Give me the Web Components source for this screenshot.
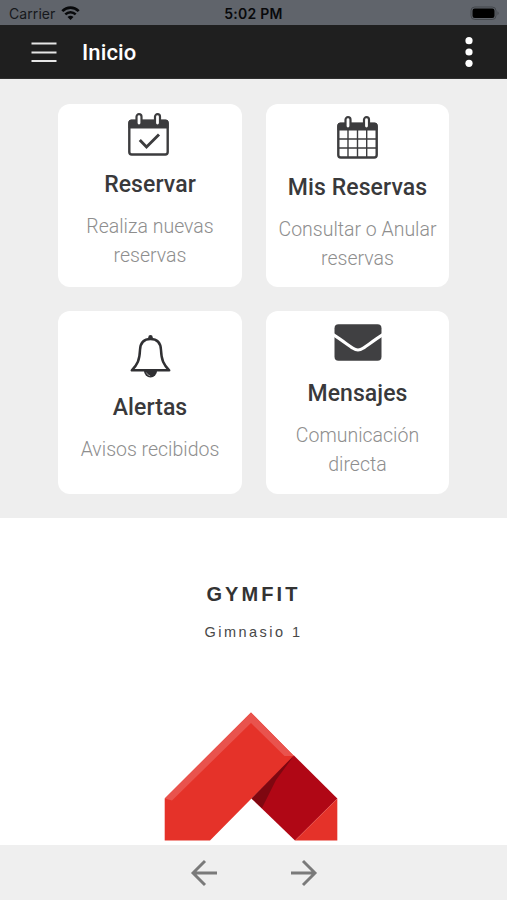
<!DOCTYPE html>
<html lang="es">
<head>
<meta charset="utf-8">
<meta name="viewport" content="width=device-width, initial-scale=1">
<title>Inicio</title>
<style>
  body {
    margin: 0;
    background: #fff;
    font-family: Roboto, 'Liberation Sans', sans-serif;
    color: #3c3c3e;
  }
</style>
</head>
<body>
<gym-app></gym-app>

<script>
class StatusBar extends HTMLElement {
  constructor() {
    super();
    this.attachShadow({ mode: 'open' });
  }

  connectedCallback() {
    this.shadowRoot.innerHTML = `
      <style>
        :host {
          display: grid;
          grid-template-columns: 1fr auto 1fr;
          align-items: center;
          height: 25px;
          box-sizing: border-box;
          padding: 2px 6px 0 9px;
          background: #60646b;
          color: #16181b;
          font: 14px/22px Inter, sans-serif;
        }
        .left { display: flex; align-items: center; gap: 6px; letter-spacing: 0.08px; }
        .time { margin-right: 3px; font-weight: 600; font-size: 14px; letter-spacing: 0.25px; color: #08090b; }
        .battery { justify-self: end; }
        svg { display: block; }
      </style>
      <div class="left">
        <span>Carrier</span>
        <svg width="19" height="15" viewBox="0 0 19 15" fill="none" stroke="#08090b">
          <path d="M1.3 5.1C6 .4 13 .4 17.700 5.100" stroke-width="2.700"/>
          <path d="M4.300 8.300C7.300 5.400 11.700 5.400 14.700 8.300" stroke-width="2.500"/>
          <path d="M9.500 14L6.500 10.900Q9.500 8.600 12.500 10.900Z" fill="#08090b" stroke="none"/>
        </svg>
      </div>
      <span class="time">5:02 PM</span>
      <svg class="battery" width="31" height="15" viewBox="0 0 31 15">
        <rect x="1" y="1" width="25" height="12.500" rx="3.800" fill="none" stroke="#43474c"/>
        <rect x="2.500" y="2.600" width="22" height="9.300" rx="2.200" fill="#000"/>
        <path d="M27.500 5.200Q29.800 7.200 27.500 9.200Z" fill="#43474c"/>
      </svg>
    `;
  }
}

class AppToolbar extends HTMLElement {
  constructor() {
    super();
    this.attachShadow({ mode: 'open' });
  }

  connectedCallback() {
    this.shadowRoot.innerHTML = `
      <style>
        :host {
          display: flex;
          align-items: center;
          height: 54px;
          box-sizing: border-box;
          padding: 0 34px 0 31px;
          background: #1f1f1f;
          border-bottom: 1px solid #2e2e2e;
          color: #fff;
        }
        h1 {
          flex: 1;
          margin: 2px 0 0 25px;
          font: 500 22px/28px Roboto, sans-serif;
          letter-spacing: 0.1px;
        }
        svg { display: block; }
      </style>
      <svg width="26" height="22" viewBox="0 0 26 22" stroke="#e6e6e6" stroke-width="1.900">
        <path d="M.5 2.500H25.500M.5 11.500H25.500M.5 20H25.500"/>
      </svg>
      <h1><slot></slot></h1>
      <svg width="8" height="30" viewBox="0 0 8 30" fill="#fff">
        <circle cx="4" cy="3.700" r="3.600"/><circle cx="4" cy="15" r="3.600"/><circle cx="4" cy="26.300" r="3.600"/>
      </svg>
    `;
  }
}

class MenuCard extends HTMLElement {
  constructor() {
    super();
    this.attachShadow({ mode: 'open' });
  }

  connectedCallback() {
    const title = this.getAttribute('heading');
    this.shadowRoot.innerHTML = `
      <style>
        :host {
          display: flex;
          flex-direction: column;
          align-items: center;
          box-sizing: border-box;
          padding: var(--top, 9px) 8px 0;
          background: #fff;
          border-radius: 12px;
          text-align: center;
        }
        h2 {
          margin: var(--gap, 15px) 0 0;
          color: #39393b;
          font: 500 23px/28px Roboto, sans-serif;
          letter-spacing: 0.08px;
        }
        p {
          margin: 13px 0 0;
          color: #8e8e8e;
          font: 300 19.5px/29px Roboto, sans-serif;
        }
      </style>
      <slot name="icon"></slot>
      <h2>${title}</h2>
      <p><slot></slot></p>
    `;
  }
}

class GymBrand extends HTMLElement {
  constructor() {
    super();
    this.attachShadow({ mode: 'open' });
  }

  connectedCallback() {
    this.shadowRoot.innerHTML = `
      <style>
        :host {
          display: flex;
          flex-direction: column;
          align-items: center;
          padding-top: 63.5px;
          font-family: 'Liberation Sans', sans-serif;
        }
        h3 {
          margin: 0;
          font-size: 20px;
          line-height: 24px;
          letter-spacing: 3.1px;
          color: #333;
        }
        p {
          margin: 16px 0 0;
          font-size: 14.5px;
          line-height: 20px;
          letter-spacing: 2.45px;
          color: #484848;
        }
        svg { display: block; margin: 70px 6px 0 0; }
      </style>
      <h3>GYMFIT</h3>
      <p>Gimnasio 1</p>
      <svg width="174" height="129" viewBox="0 0 174 129">
        <path d="M.7 86.500L87 .5L130 44L87.500 86.500L46 128.500H.7Z" fill="#e53229"/>
        <path d="M.7 86.500L87 .5L130 44L120.500 44L87 11L8 88.500Z" fill="#e9534d"/>
        <path d="M130 43.500L173.300 86.500L131 128.500L87.500 86.500Z" fill="#b00715"/>
        <path d="M130 43.500L112 68L98 96L87.500 86.500Z" fill="#7f0710"/>
        <path d="M173.300 86.500V128.500H131Z" fill="#e53229"/>
      </svg>
    `;
  }
}

class NavFooter extends HTMLElement {
  constructor() {
    super();
    this.attachShadow({ mode: 'open' });
  }

  connectedCallback() {
    this.shadowRoot.innerHTML = `
      <style>
        :host {
          display: flex;
          align-items: center;
          justify-content: center;
          gap: 72px;
          height: 55px;
          background: #efefef;
        }
        svg { display: block; }
      </style>
      <svg width="28" height="28" viewBox="0 0 28 28" fill="none" stroke="#7a7a7a" stroke-width="2.900">
        <path d="M27 14H3M15 2L3 14L15 26"/>
      </svg>
      <svg width="28" height="28" viewBox="0 0 28 28" fill="none" stroke="#7a7a7a" stroke-width="2.900">
        <path d="M1 14H25M13 2L25 14L13 26"/>
      </svg>
    `;
  }
}

class GymApp extends HTMLElement {
  constructor() {
    super();
    this.attachShadow({ mode: 'open' });
  }

  connectedCallback() {
    this.shadowRoot.innerHTML = `
      <style>
        :host {
          display: flex;
          flex-direction: column;
          height: 100vh;
          overflow: hidden;
        }
        .menu {
          display: grid;
          grid-template-columns: repeat(2, 183.5px);
          grid-auto-rows: 183px;
          gap: 24.5px 24px;
          justify-content: center;
          padding: 24.5px 0 24px 0.5px;
          background: #eee;
        }
        .menu svg { display: block; }
        gym-brand { flex: 1; min-height: 0; }
      </style>
      <status-bar></status-bar>
      <app-toolbar>Inicio</app-toolbar>
      <div class="menu">
        <menu-card heading="Reservar" style="--top: 9px">
          <svg slot="icon" style="margin-right: 3px" width="41" height="43" viewBox="0 0 41 43" fill="none" stroke="#3c3c3e">
            <rect x="1.300" y="8" width="38.400" height="33.500" rx="2.500" stroke-width="2.400"/>
            <path d="M1 15V9Q1 7 3 7H38Q40 7 40 9V15Z" fill="#3c3c3e" stroke-width="1"/>
            <rect x="8.500" y="1.200" width="5" height="11.300" rx="2.500" fill="#fff" stroke-width="2.200"/>
            <rect x="27" y="1.200" width="5" height="11.300" rx="2.500" fill="#fff" stroke-width="2.200"/>
            <path d="M11.800 27L18.500 34L31 21.500" stroke-width="2.900"/>
          </svg>
          Realiza nuevas reservas
        </menu-card>
        <menu-card heading="Mis Reservas" style="--top: 12px">
          <svg slot="icon" width="41" height="43" viewBox="0 0 41 43" fill="none" stroke="#3c3c3e">
            <rect x="1.300" y="8" width="38.400" height="33.500" rx="2.500" stroke-width="2.400"/>
            <path d="M1 14V9Q1 7 3 7H38Q40 7 40 9V14Z" fill="#3c3c3e" stroke-width="1"/>
            <rect x="8.500" y="1.200" width="5" height="11.300" rx="2.500" fill="#fff" stroke-width="2.200"/>
            <rect x="27" y="1.200" width="5" height="11.300" rx="2.500" fill="#fff" stroke-width="2.200"/>
            <path d="M11 14V41M20.500 14V41M29.700 14V41M2 23H39M2 32H39" stroke-width="1.400"/>
          </svg>
          Consultar o Anular reservas
        </menu-card>
        <menu-card heading="Alertas" style="--top: 24px; --gap: 15.5px">
          <svg slot="icon" width="41" height="43" viewBox="0 0 41 43">
            <path d="M18.300 4V2.300A2.200 2.200 0 0 1 22.700 2.300V4Z" fill="#303033"/>
            <path d="M20.500 4C13.500 4 10.300 8.500 10 15C9.600 25 7.500 29.500 1.800 35.300H39.200C33.500 29.500 31.400 25 31 15C30.700 8.500 27.500 4 20.500 4Z" fill="none" stroke="#303033" stroke-width="2.500" stroke-linejoin="round"/>
            <path d="M14 36H27A6.500 6.500 0 0 1 14 36Z" fill="#303033"/>
            <path d="M16.300 37.500Q17.500 40.500 20.200 40.800" stroke="#aaa" stroke-width=".8" fill="none"/>
          </svg>
          Avisos recibidos
        </menu-card>
        <menu-card heading="Mensajes" style="--top: 13px; --gap: 19px">
          <svg slot="icon" width="48" height="37" viewBox="0 0 48 37">
            <rect x=".5" y=".3" width="47" height="36.500" rx="4" fill="#404042"/>
            <path d="M-1 10.500C7 15.500 14 21 19 24.300Q24 27.500 29 24.300C34 21 41 15.500 49 10.500" fill="none" stroke="#fff" stroke-width="3"/>
          </svg>
          Comunicación directa
        </menu-card>
      </div>
      <gym-brand></gym-brand>
      <nav-footer></nav-footer>
    `;
  }
}

customElements.define('status-bar', StatusBar);
customElements.define('app-toolbar', AppToolbar);
customElements.define('menu-card', MenuCard);
customElements.define('gym-brand', GymBrand);
customElements.define('nav-footer', NavFooter);
customElements.define('gym-app', GymApp);
</script>
</body>
</html>
